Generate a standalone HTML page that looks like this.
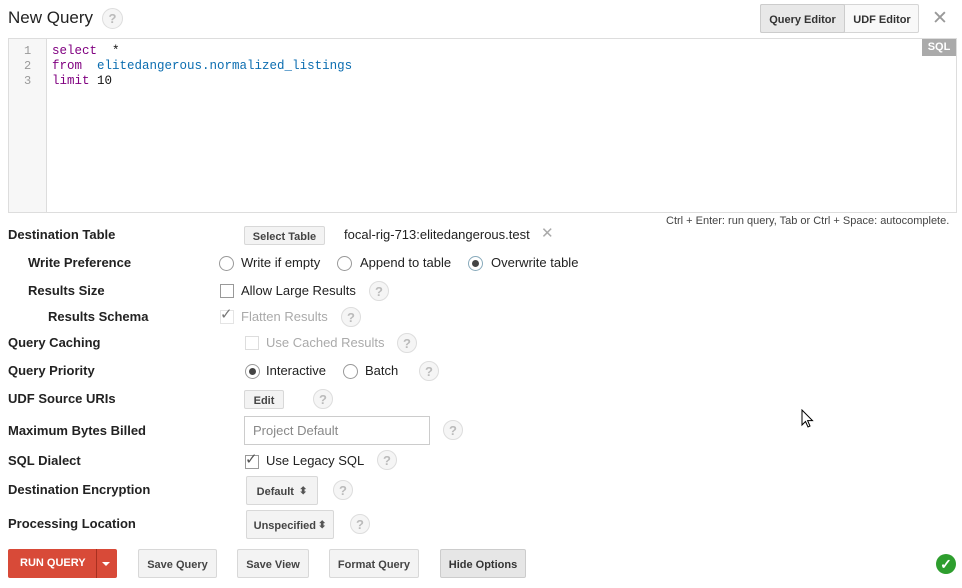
<!DOCTYPE html>
<html><head><style>
*{box-sizing:border-box}
body{margin:0;width:962px;height:588px;background:#fff;font-family:"Liberation Sans",Arial,sans-serif;color:#222;position:relative;overflow:hidden}
.a{position:absolute}
.lbl{position:absolute;font-size:13px;font-weight:bold;color:#222}
.t{position:absolute;font-size:14px;color:#222;white-space:nowrap}
.h{position:absolute;width:20px;height:20px;border-radius:50%;border:1px solid #ddd;background:#f5f5f5;color:#bbb;font-size:13px;font-weight:bold;display:flex;align-items:center;justify-content:center}
.rad{position:absolute;width:15px;height:15px;border-radius:50%;border:1px solid #999;background:#fff}
.rad.on::after{content:"";position:absolute;left:3px;top:3px;width:7px;height:7px;border-radius:50%;background:#444}
.cb{position:absolute;width:14px;height:14px;border:1px solid #999;background:#fff}
.btn{position:absolute;border:1px solid #d8d8d8;background:#f3f3f3;border-radius:2px;font-size:11px;font-weight:bold;color:#444;display:flex;align-items:center;justify-content:center;padding-top:2px}
.code{position:absolute;font-family:"Liberation Mono",monospace;font-size:12.5px;line-height:15px;white-space:pre}
.k{color:#800080}.i{color:#0b6db0}.n{color:#111}
</style></head><body>
<div class="t" style="left:8px;top:8px;font-size:17px">New Query</div>
<div class="h" style="left:102px;top:8px;width:21px;height:21px">?</div>

<div class="a" style="left:760px;top:4px;width:159px;height:29px;border:1px solid #d5d5d5;border-radius:2px;background:#f8f8f8"></div>
<div class="btn" style="left:760px;top:4px;width:85px;height:29px;border-color:#ccc;background:#e8e8e8;color:#333">Query Editor</div>
<div class="btn" style="left:845px;top:4px;width:74px;height:29px;border:none;background:transparent;color:#333">UDF Editor</div>
<div class="t" style="left:932px;top:7px;font-size:19px;color:#999">✕</div>

<div class="a" style="left:8px;top:38px;width:949px;height:175px;border:1px solid #ddd"></div>
<div class="a" style="left:9px;top:39px;width:38px;height:173px;background:#f7f7f7;border-right:1px solid #ddd"></div>
<div class="code" style="left:24px;top:44px;color:#999;font-size:12px">1
2
3</div>
<div class="code" style="left:52px;top:44px"><span class="k">select</span>  <span class="n">*</span>
<span class="k">from</span>  <span class="i">elitedangerous.normalized_listings</span>
<span class="k">limit</span> <span class="n">10</span></div>
<div class="a" style="left:922px;top:39px;width:34px;height:17px;background:#aaa;color:#fff;font-size:11px;font-weight:bold;text-align:center;line-height:17px">SQL</div>
<div class="t" style="left:666px;top:215px;font-size:11px;color:#444">Ctrl + Enter: run query, Tab or Ctrl + Space: autocomplete.</div>

<div class="lbl" style="left:8px;top:227px">Destination Table</div>
<div class="btn" style="left:244px;top:226px;width:81px;height:19px">Select Table</div>
<div class="t" style="left:344px;top:227px;font-size:13px">focal-rig-713:elitedangerous.test</div>
<div class="t" style="left:541px;top:224px;font-size:15px;color:#aaa">✕</div>

<div class="lbl" style="left:28px;top:255px">Write Preference</div>
<div class="rad" style="left:219px;top:256px"></div><div class="t" style="left:241px;top:255px;font-size:13px">Write if empty</div>
<div class="rad" style="left:337px;top:256px"></div><div class="t" style="left:360px;top:255px;font-size:13px">Append to table</div>
<div class="rad on" style="left:468px;top:256px;border-color:#8ab"></div><div class="t" style="left:491px;top:255px;font-size:13px">Overwrite table</div>

<div class="lbl" style="left:28px;top:283px">Results Size</div>
<div class="cb" style="left:220px;top:284px"></div><div class="t" style="left:241px;top:283px;font-size:13px">Allow Large Results</div>
<div class="h" style="left:369px;top:281px">?</div>

<div class="lbl" style="left:48px;top:309px">Results Schema</div>
<div class="cb" style="left:220px;top:310px;border-color:#e4e4e4"></div>
<div class="t" style="left:220px;top:305px;font-size:15px;color:#777">✓</div><div class="t" style="left:241px;top:309px;font-size:13px;color:#aaa">Flatten Results</div>
<div class="h" style="left:341px;top:307px">?</div>

<div class="lbl" style="left:8px;top:335px">Query Caching</div>
<div class="cb" style="left:245px;top:336px;border-color:#ddd"></div><div class="t" style="left:266px;top:335px;font-size:13px;color:#aaa">Use Cached Results</div>
<div class="h" style="left:397px;top:333px">?</div>

<div class="lbl" style="left:8px;top:363px">Query Priority</div>
<div class="rad on" style="left:245px;top:364px"></div><div class="t" style="left:266px;top:363px;font-size:13px">Interactive</div>
<div class="rad" style="left:343px;top:364px"></div><div class="t" style="left:365px;top:363px;font-size:13px">Batch</div>
<div class="h" style="left:419px;top:361px">?</div>

<div class="lbl" style="left:8px;top:391px">UDF Source URIs</div>
<div class="btn" style="left:244px;top:390px;width:40px;height:19px">Edit</div>
<div class="h" style="left:313px;top:389px">?</div>

<div class="lbl" style="left:8px;top:423px">Maximum Bytes Billed</div>
<div class="a" style="left:244px;top:416px;width:186px;height:29px;border:1px solid #ccc"></div>
<div class="t" style="left:253px;top:423px;font-size:13px;color:#888">Project Default</div>
<div class="h" style="left:443px;top:420px">?</div>

<div class="lbl" style="left:8px;top:453px">SQL Dialect</div>
<div class="cb" style="left:245px;top:455px"></div><div class="t" style="left:245px;top:450px;font-size:15px;color:#555">✓</div>
<div class="t" style="left:266px;top:453px;font-size:13px">Use Legacy SQL</div>
<div class="h" style="left:377px;top:450px">?</div>

<div class="lbl" style="left:8px;top:482px">Destination Encryption</div>
<div class="btn" style="left:246px;top:476px;width:72px;height:29px">Default <span style="font-size:10px;color:#555;margin-left:5px">⬍</span></div>
<div class="h" style="left:333px;top:480px">?</div>

<div class="lbl" style="left:8px;top:516px">Processing Location</div>
<div class="btn" style="left:246px;top:510px;width:88px;height:29px">Unspecified <span style="font-size:10px;color:#555;margin-left:2px">⬍</span></div>
<div class="h" style="left:350px;top:514px">?</div>

<div class="a" style="left:8px;top:549px;width:109px;height:29px;background:#d84a38;border-radius:2px"></div>
<div class="a" style="left:96px;top:549px;width:1px;height:29px;background:#a83020"></div>
<div class="t" style="left:20px;top:557px;font-size:11px;font-weight:bold;color:#fff">RUN QUERY</div>
<div class="a" style="left:102px;top:562px;width:0;height:0;border-left:4px solid transparent;border-right:4px solid transparent;border-top:4px solid #fff"></div>
<div class="btn" style="left:138px;top:549px;width:79px;height:29px">Save Query</div>
<div class="btn" style="left:237px;top:549px;width:72px;height:29px">Save View</div>
<div class="btn" style="left:329px;top:549px;width:90px;height:29px">Format Query</div>
<div class="btn" style="left:440px;top:549px;width:86px;height:29px;background:#e6e6e6;border-color:#ccc;color:#333">Hide Options</div>

<div class="a" style="left:936px;top:554px;width:20px;height:20px;border-radius:50%;background:#2e9e2e;color:#fff;font-size:14px;text-align:center;line-height:20px;font-weight:bold">✓</div>
<svg class="a" style="left:801px;top:409px" width="13" height="20" viewBox="0 0 13 20"><path d="M1 1 L1 16 L4.5 12.5 L7 18 L9 17 L6.6 11.6 L11.5 11.6 Z" fill="#fff" stroke="#000" stroke-width="1"/></svg>
</body></html>
